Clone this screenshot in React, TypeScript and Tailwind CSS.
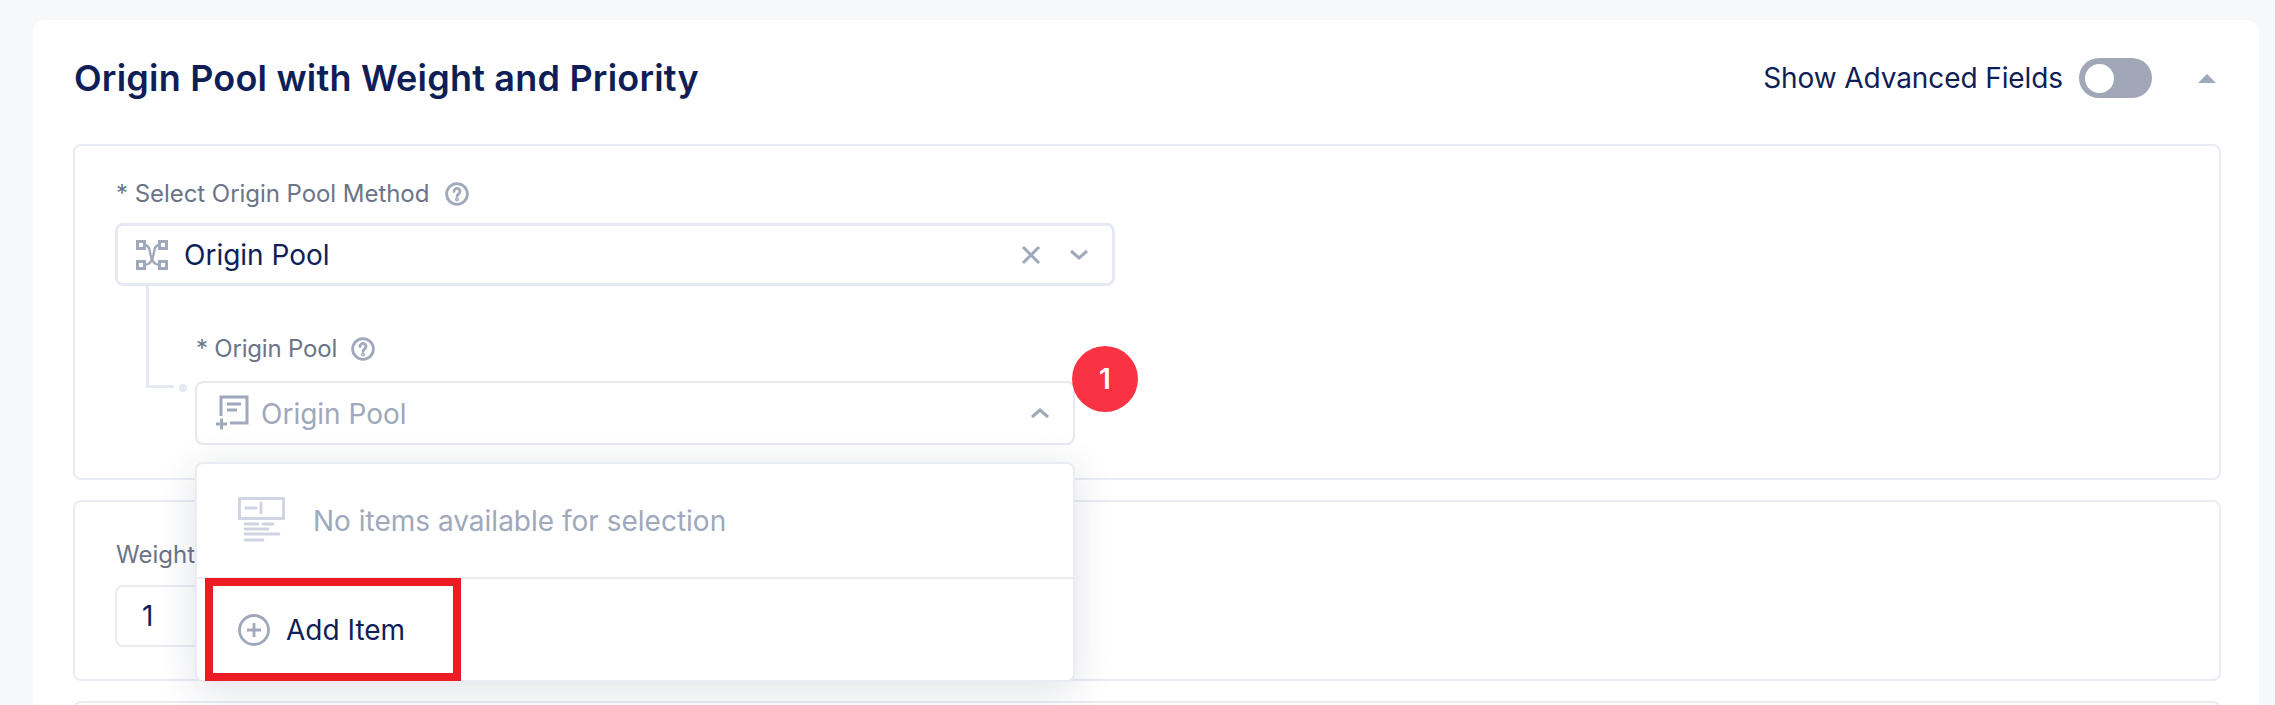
import React from 'react';

const HelpIcon = () => (
  <svg width="24" height="24" viewBox="0 0 24 24" fill="none" stroke="#a0a8bb" strokeWidth="2.8" strokeLinecap="round" className="shrink-0">
    <circle cx="12" cy="12" r="10.4" />
    <path d="M9 9.500a3 3 0 1 1 4.600 2.500c-1 .7-1.600 1.200-1.600 2.400" />
    <circle cx="12" cy="17.600" r="0.600" fill="#a0a8bb" />
  </svg>
);

const Chevron = ({ up }: { up?: boolean }) => (
  <svg width="20" height="12" viewBox="0 0 20 12" fill="none" stroke="#a0a8bb" strokeWidth="3">
    <path d={up ? 'M2 10l8-7 8 7' : 'M2 2l8 7 8-7'} />
  </svg>
);

const RouteIcon = () => (
  <svg width="32" height="32" viewBox="0 0 32 32" fill="none" stroke="#a0a8bb" strokeWidth="3" className="shrink-0">
    <rect x="1.500" y="2.500" width="7" height="7" />
    <rect x="23.500" y="2.500" width="7" height="7" />
    <rect x="1.500" y="22.500" width="7" height="7" />
    <rect x="23.500" y="22.500" width="7" height="7" />
    <path d="M8.500 6c4 0 5 3 5.500 7s2 13 9.500 13" strokeWidth="2.400" />
    <path d="M23.500 6c-4 0-5 3-5.500 7s-2 13-9.500 13" strokeWidth="2.400" />
  </svg>
);

const ListPlusIcon = () => (
  <svg width="34" height="36" viewBox="0 0 34 36" fill="none" stroke="#a0a8bb" strokeWidth="3" className="shrink-0">
    <path d="M6 21V2h26v26H15" />
    <path d="M12 9h14M12 15h10" />
    <path d="M1 29h11M6.500 23.500v11" />
  </svg>
);

const EmptyIcon = () => (
  <svg width="47" height="47" viewBox="0 0 47 47" fill="none" stroke="#cdd3e0" strokeWidth="2.800" strokeLinecap="round">
    <rect x="1.500" y="1.500" width="44" height="20" strokeLinecap="butt" />
    <path d="M8 11h10M23 6v10M7 27h13M25 27h10M7 32h23M7 37h34M7 43h18" />
  </svg>
);

const PlusCircleIcon = () => (
  <svg width="32" height="32" viewBox="0 0 32 32" fill="none" stroke="#a0a8bb" strokeWidth="2.800" className="shrink-0">
    <circle cx="16" cy="16" r="14.500" />
    <path d="M16 9v14M9 16h14" />
  </svg>
);

export default function App() {
  return (
    <div className="h-[705px] overflow-hidden bg-[#f7f8fa] pt-[20px] pl-[33px] pr-[16px] font-['Inter',sans-serif] text-[#0f1e57]">
      <div className="h-[720px] rounded-xl bg-white pl-[40px] pr-[38px]">
        <div className="flex h-[116px] items-center justify-between mb-[8px] pl-[1px] pr-[1px]">
          <h1 className="text-[36px] font-semibold tracking-[0.2px]">Origin Pool with Weight and Priority</h1>
          <div className="flex items-center">
            <span className="text-[28px] tracking-[-0.1px]">Show Advanced Fields</span>
            <div className="ml-[16px] flex h-[40px] w-[73px] items-center rounded-full bg-[#a0a8b8] pl-[6px]">
              <div className="h-[29px] w-[29px] rounded-full bg-white" />
            </div>
            <svg width="18" height="9" viewBox="0 0 18 9" fill="#a0a8bb" className="ml-[46px] mr-[4px]">
              <path d="M9 0l9 9H0z" />
            </svg>
          </div>
        </div>

        <div className="h-[336px] rounded-lg border-2 border-[#eaecf4] pl-[40px] pt-[34px]">
          <div className="flex h-[28px] items-center gap-[16px] pl-[1px] text-[24px] tracking-[-0.05px] text-[#6b7488]">
            <span>* Select Origin Pool Method</span>
            <HelpIcon />
          </div>
          <div className="mt-[15px] flex h-[63px] w-[1000px] items-center rounded-lg border-[3px] border-[#e6e9f3] pl-[18px] pr-[23px] text-[28px]">
            <RouteIcon />
            <span className="ml-[16px] flex-1">Origin Pool</span>
            <svg width="20" height="20" viewBox="0 0 20 20" stroke="#a0a8bb" strokeWidth="3">
              <path d="M2 2l16 16M18 2L2 18" />
            </svg>
            <span className="ml-[28px]">
              <Chevron />
            </span>
          </div>

          <div className="relative ml-[80px] mt-[48px] w-[880px]">
            <div className="absolute left-[-49px] top-[-48px] h-[102px] w-[28px] border-b-[3px] border-l-[3px] border-[#e6e9f3]" />
            <div className="absolute left-[-16px] top-[50px] h-[8px] w-[8px] rounded-full bg-[#e6e9f3]" />
            <div className="flex h-[28px] items-center gap-[14px] pl-[1px] pt-[1px] text-[24px] tracking-[-0.2px] text-[#6b7488]">
              <span>* Origin Pool</span>
              <HelpIcon />
            </div>
            <div className="mt-[19px] flex h-[64px] items-center rounded-lg border-2 border-[#e6e9f3] pl-[18px] pr-[23px] text-[28px] text-[#a0a8bb]">
              <ListPlusIcon />
              <span className="ml-[12px] flex-1 pt-[2px]">Origin Pool</span>
              <Chevron up />
            </div>
            <div className="absolute left-[877px] top-[12px] flex h-[66px] w-[66px] items-center justify-center rounded-full bg-[#fa3344] text-[28px] font-semibold text-white">
              1
            </div>

            <div className="absolute left-0 top-[128px] z-10 w-[880px] rounded-lg border-2 border-[#eaecf4] bg-white shadow-[0_8px_40px_rgba(30,40,80,0.14)]">
              <div className="flex h-[113px] items-center pl-[41px]">
                <EmptyIcon />
                <span className="ml-[28px] text-[28px] text-[#a0a8bb]">No items available for selection</span>
              </div>
              <div className="flex h-[103px] items-center border-t-2 border-[#eaecf4] pl-[41px]">
                <PlusCircleIcon />
                <span className="ml-[16px] text-[28px]">Add Item</span>
              </div>
              <div className="absolute left-[8px] top-[114px] h-[103px] w-[256px] border-[8px] border-[#ed1c24]" />
            </div>
          </div>
        </div>

        <div className="mt-[20px] h-[181px] rounded-lg border-2 border-[#eaecf4] pl-[40px] pt-[39px]">
          <div className="flex h-[28px] items-center pl-[1px] text-[24px] text-[#6b7488]">Weight</div>
          <div className="mt-[16px] flex h-[62px] w-[400px] items-center rounded-lg border-2 border-[#eaecf4] pl-[25px] text-[28px]">1</div>
        </div>

        <div className="mt-[20px] h-[60px] rounded-lg border-2 border-[#eaecf4]" />
      </div>
    </div>
  );
}
